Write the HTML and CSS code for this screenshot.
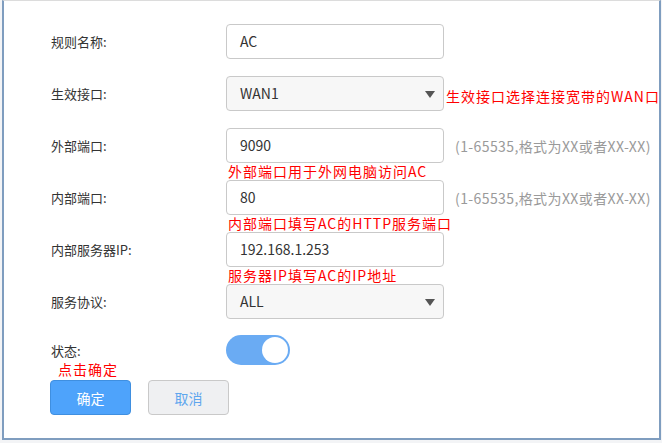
FILE: index.html
```html
<!DOCTYPE html>
<html lang="zh-CN">
<head>
    <meta charset="UTF-8">
    <title>虚拟服务器</title>
    <link rel="stylesheet" href="styles.css">
</head>
<body>
    <div class="panel">
        <div class="row">
            <label class="label">规则名称:</label>
            <div class="field">AC</div>
        </div>
        <div class="row">
            <label class="label">生效接口:</label>
            <div class="field select">WAN1<span class="caret"></span></div>
            <span class="mark side">生效接口选择连接宽带的WAN口</span>
        </div>
        <div class="row">
            <label class="label">外部端口:</label>
            <div class="field">9090</div>
            <span class="hint">(1-65535,格式为XX或者XX-XX)</span>
            <span class="mark note">外部端口用于外网电脑访问AC</span>
        </div>
        <div class="row">
            <label class="label">内部端口:</label>
            <div class="field">80</div>
            <span class="hint">(1-65535,格式为XX或者XX-XX)</span>
            <span class="mark note">内部端口填写AC的HTTP服务端口</span>
        </div>
        <div class="row">
            <label class="label">内部服务器IP:</label>
            <div class="field">192.168.1.253</div>
            <span class="mark note">服务器IP填写AC的IP地址</span>
        </div>
        <div class="row">
            <label class="label">服务协议:</label>
            <div class="field select">ALL<span class="caret"></span></div>
        </div>
        <div class="row switch-row">
            <label class="label">状态:</label>
            <div class="switch on"></div>
        </div>
        <div class="mark click-tip">点击确定</div>
        <div class="actions">
            <button class="btn primary">确定</button>
            <button class="btn">取消</button>
        </div>
    </div>
</body>
</html>
```

FILE: styles.css
```css
body{
    margin: 0;
    background-color: #f3f4f6;
    font-family: "Noto Sans CJK SC", "Noto Sans", sans-serif;
    color: #333;
}

.panel{
    margin-left: 2px;
    width: 608px;
    height: 414px;
    padding: 23px 0 0 47px;
    background-color: #fff;
    border-top: 1px solid #dcdcdc;
    border-left: 2px solid #7f9dbf;
    border-right: 2px solid #7f9dbf;
    border-bottom: 2px solid #7f9dbf;
}

.row{
    display: grid;
    grid-template-columns: 175px 218px auto;
    grid-template-rows: 35px 17px;
    align-items: center;
}

.label{
    font-size: 13px;
    color: #333;
}

.field{
    height: 35px;
    box-sizing: border-box;
    border: 1px solid #c9c9c9;
    border-radius: 4px;
    padding: 0 13px;
    font-size: 14px;
    line-height: 33px;
    color: #333;
    background-color: #fff;
}

.select{
    position: relative;
    background-color: #f7f7f7;
}

.caret{
    position: absolute;
    right: 8px;
    top: 14px;
    border-left: 5px solid transparent;
    border-right: 5px solid transparent;
    border-top: 7px solid #555;
}

.hint{
    padding-left: 11px;
    font-size: 14px;
    letter-spacing: 0.4px;
    color: #9a9a9a;
    white-space: nowrap;
}

.mark{
    color: #ff0000;
    font-size: 14px;
    letter-spacing: 1px;
    white-space: nowrap;
}

.side{
    padding-left: 2px;
    padding-top: 4px;
}

.note{
    grid-column: 2 / 4;
    grid-row: 2;
    padding-left: 2px;
    line-height: 17px;
}

.switch-row{
    grid-template-rows: 30px;
    margin-top: -1px;
}

.switch{
    position: relative;
    width: 64px;
    height: 30px;
    border-radius: 15px;
    background-color: #6aabf3;
}

.switch.on::after{
    content: "";
    position: absolute;
    right: 2px;
    top: 2px;
    width: 26px;
    height: 26px;
    border-radius: 50%;
    background-color: #fff;
}

.click-tip{
    margin: -4px 0 0 7px;
    height: 17px;
    line-height: 17px;
}

.actions{
    display: flex;
    gap: 17px;
    margin: 2px 0 0 -1px;
}

.btn{
    width: 81px;
    height: 35px;
    border: 1px solid #c9c9c9;
    border-radius: 4px;
    background-color: #eff0f2;
    color: #5ea6ee;
    font-family: inherit;
    font-size: 14px;
}

.primary{
    background-color: #4ea3fb;
    border-color: #3f8fe0;
    color: #fff;
}
```
